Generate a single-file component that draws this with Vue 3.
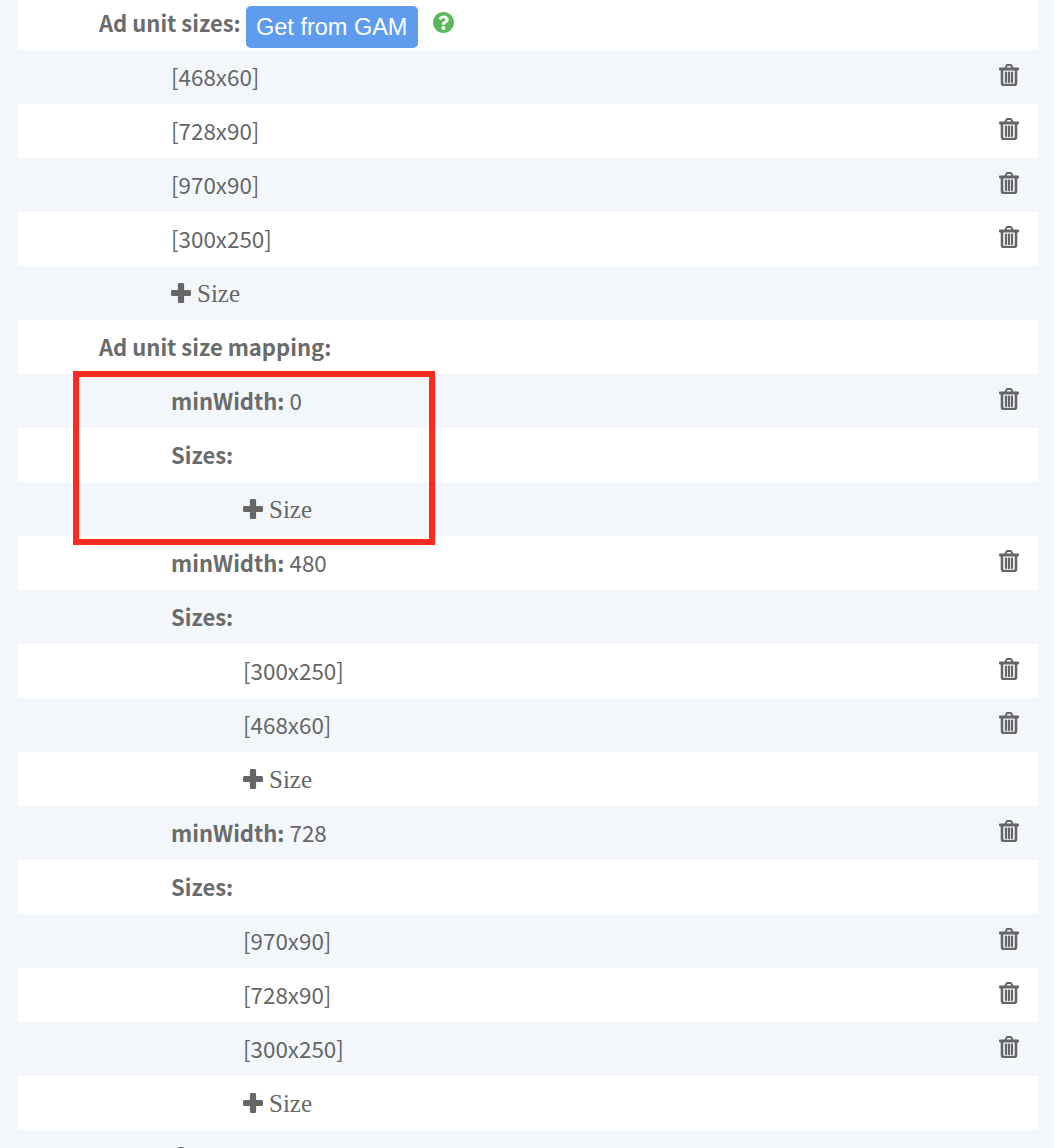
<script setup>
const rows = [
  { level: 1, label: 'Ad unit sizes:', gam: true },
  { level: 2, text: '[468x60]', del: true },
  { level: 2, text: '[728x90]', del: true },
  { level: 2, text: '[970x90]', del: true },
  { level: 2, text: '[300x250]', del: true },
  { level: 2, add: 'Size' },
  { level: 1, label: 'Ad unit size mapping:' },
  { level: 2, label: 'minWidth:', text: '0', del: true },
  { level: 2, label: 'Sizes:' },
  { level: 3, add: 'Size' },
  { level: 2, label: 'minWidth:', text: '480', del: true },
  { level: 2, label: 'Sizes:' },
  { level: 3, text: '[300x250]', del: true },
  { level: 3, text: '[468x60]', del: true },
  { level: 3, add: 'Size' },
  { level: 2, label: 'minWidth:', text: '728', del: true },
  { level: 2, label: 'Sizes:' },
  { level: 3, text: '[970x90]', del: true },
  { level: 3, text: '[728x90]', del: true },
  { level: 3, text: '[300x250]', del: true },
  { level: 3, add: 'Size' },
  // cut off by the bottom of the window, only the top of the plus shows
  { level: 2, add: ' ' },
]
</script>

<template>
  <div class="page">
    <div class="list">
      <div
        v-for="(row, i) in rows"
        :key="i"
        class="row"
        :class="['row--l' + row.level, { 'row--odd': i % 2 === 1 }]"
      >
        <template v-if="row.add">
          <svg class="plus" viewBox="0 0 20 20">
            <path d="M8.5 0h3c1 0 1.6.6 1.6 1.6V7h5.3c1 0 1.6.6 1.6 1.6v2.9c0 1-.6 1.6-1.6 1.6h-5.3v5.3c0 1-.6 1.6-1.6 1.6h-3c-1 0-1.6-.6-1.6-1.6v-5.3H1.6c-1 0-1.6-.6-1.6-1.6V8.6C0 7.6.6 7 1.6 7h5.3V1.6C6.9.6 7.5 0 8.5 0z" />
          </svg>
          <span class="add-text">{{ row.add }}</span>
        </template>
        <template v-else>
          <b v-if="row.label" class="label">{{ row.label }}</b>
          <span v-if="row.text" class="value">{{ row.text }}</span>
        </template>

        <template v-if="row.gam">
          <button class="gam">Get from GAM</button>
          <svg class="help" viewBox="8 8 496 496">
            <path d="M504 256c0 136.997-111.043 248-248 248S8 392.997 8 256C8 119.083 119.043 8 256 8s248 111.083 248 248zM262.655 90c-54.497 0-89.255 22.957-116.549 63.758-3.536 5.286-2.353 12.415 2.715 16.258l34.699 26.31c5.205 3.947 12.621 3.008 16.665-2.122 17.864-22.658 30.113-35.797 57.303-35.797 20.429 0 45.698 13.148 45.698 32.958 0 14.976-12.363 22.667-32.534 33.976C247.128 238.528 216 254.941 216 296v4c0 6.627 5.373 12 12 12h56c6.627 0 12-5.373 12-12v-1.333c0-28.462 83.186-29.647 83.186-106.667 0-58.002-60.165-102-116.531-102zM256 338c-25.365 0-46 20.635-46 46 0 25.364 20.635 46 46 46s46-20.636 46-46c0-25.365-20.635-46-46-46z" />
          </svg>
        </template>

        <svg v-if="row.del" class="trash" viewBox="0 0 20 22">
          <path class="trash__line" d="M6.3 4.2 7.4 1.8C7.6 1.3 8 1 8.5 1h3c.5 0 .9.3 1.1.8l1.1 2.4" />
          <rect x="0" y="3.4" width="20" height="3" rx="0.8" />
          <path class="trash__body" d="M3 5.5V19c0 1.2.8 2 2 2h10c1.2 0 2-.8 2-2V5.5" />
          <rect x="5.9" y="7.5" width="2.2" height="11.5" rx="0.8" />
          <rect x="8.9" y="7.5" width="2.2" height="11.5" rx="0.8" />
          <rect x="11.9" y="7.5" width="2.2" height="11.5" rx="0.8" />
        </svg>
      </div>
    </div>
    <div class="highlight"></div>
  </div>
</template>

<style scoped>
.page {
  position: relative;
  height: 1148px;
  overflow: hidden;
  background: #f3f6fb;
  color: #666;
  font-family: "Noto Sans CJK JP", "Noto Sans", sans-serif;
  font-size: 22.4px;
}
.list {
  margin: -4px 16px 0 18px;
}
.row {
  display: flex;
  align-items: center;
  height: 54px;
  background: #fff;
  line-height: 30px;
}
.row--odd {
  background: #f3f6fb;
}
.row--l1 {
  padding-left: 81px;
}
.row--l2 {
  padding-left: 153px;
}
.row--l3 {
  padding-left: 225px;
}
.label {
  font-size: 22px;
  font-weight: 700;
  color: #6b6b6b;
  margin-right: 5px;
  margin-bottom: 2px;
}
.value {
  margin-bottom: 2px;
}
.add-text {
  font-family: "Liberation Serif", serif;
  font-size: 25px;
  margin-left: 6px;
  margin-top: 2px;
  white-space: pre;
}
.plus {
  width: 20px;
  height: 20px;
  fill: #666;
}
.gam {
  width: 172px;
  height: 42px;
  padding: 0;
  border: none;
  border-radius: 5px;
  background: #5f9ced;
  color: #fff;
  font-family: "Liberation Sans", sans-serif;
  font-size: 23.5px;
  margin-top: 8px;
}
.help {
  width: 21px;
  height: 21px;
  margin-left: 15px;
  margin-bottom: 1px;
  fill: #5cb85c;
}
.trash {
  width: 20px;
  height: 22px;
  margin-left: auto;
  margin-right: 19px;
  margin-bottom: 4px;
  fill: #666;
}
.trash__line {
  fill: none;
  stroke: #666;
  stroke-width: 2;
}
.trash__body {
  fill: none;
  stroke: #666;
  stroke-width: 2.6;
}
.highlight {
  position: absolute;
  left: 73px;
  top: 371px;
  width: 362px;
  height: 174px;
  box-sizing: border-box;
  border: 6px solid #ff2a1f;
}
</style>
